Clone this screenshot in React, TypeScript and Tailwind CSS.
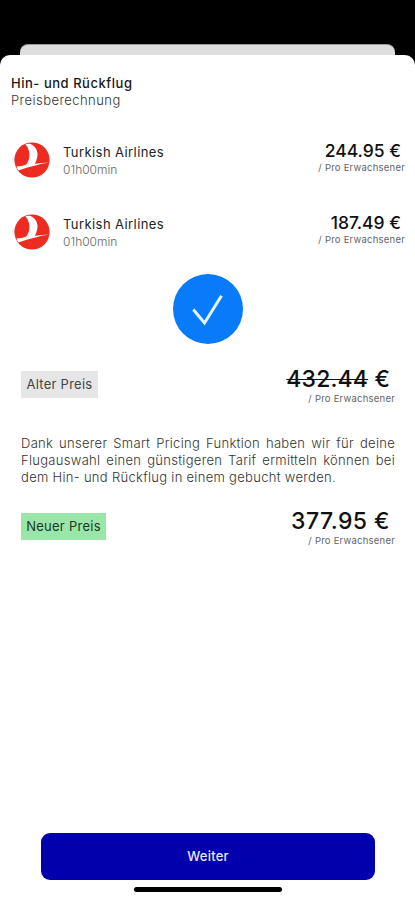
import React from "react";

function AirlineLogo() {
  return (
    <svg viewBox="0 0 36 36" className="mr-[12px] size-9 shrink-0" aria-hidden="true">
      <circle cx="18" cy="18" r="17.6" fill="#ee2b20" />
      <path
        d="M11.4 2.2 C14 1.2 16.5 1.6 18.5 3 C24.5 7.5 25 14 20.8 22 C26 21 31 20.6 35.2 20.5 C25.5 22 15.5 24.8 4.4 28.4 C3.4 27 2.8 25.8 2.5 24.4 C6.3 24.4 9.8 23.6 12.2 22.4 C17 16.5 16.4 8 11.4 2.2 Z"
        fill="#fff"
      />
    </svg>
  );
}

function FlightRow({ price }: { price: string }) {
  return (
    <div className="flex h-[72px] items-start pl-[14px] pr-[10px]">
      <AirlineLogo />
      <div className="ml-px mt-[2px]">
        <div className="text-[13px] leading-4 tracking-[0.42px] text-[#242424]">Turkish Airlines</div>
        <div className="mt-[3px] text-[12px] font-light leading-[14px] text-[#666]">01h00min</div>
      </div>
      <div className="ml-auto text-right">
        <div className="mr-[4px] text-[17.5px] font-medium leading-[18px] text-[#111]">{price} €</div>
        <div className="mt-[2px] text-[9.5px] leading-[11px] tracking-[0.23px] text-[#666]">/ Pro Erwachsener</div>
      </div>
    </div>
  );
}

function PriceRow({ label, price, old }: { label: string; price: string; old?: boolean }) {
  return (
    <div className="flex h-[42px] items-start justify-between pl-[21px] pr-5">
      <div
        className={`mt-[6px] flex h-[27px] items-center justify-center text-[13px] tracking-[0.25px] ${
          old ? "w-[77px] bg-[#e6e6e6] text-[#444]" : "w-[85px] bg-[#99e6a8] text-[#1d3824]"
        }`}
      >
        {label}
      </div>
      <div className="text-right">
        <div
          className={`mr-[5px] text-[23px] font-medium leading-7 text-[#111] ${
            old ? "tracking-[0.15px]" : "tracking-[0.45px]"
          }`}
        >
          <span className={old ? "line-through decoration-[1px]" : ""}>{price}</span> €
        </div>
        <div className="text-[9.5px] leading-[11px] tracking-[0.23px] text-[#666]">/ Pro Erwachsener</div>
      </div>
    </div>
  );
}

export default function App() {
  return (
    <div className="flex h-[900px] w-[415px] flex-col overflow-hidden bg-black font-['Inter','Liberation_Sans',sans-serif]">
      <div className="mx-5 mt-11 h-[11px] shrink-0 rounded-t-[8px] border-t border-[#999] bg-[#dedede]" />
      <main className="flex flex-1 flex-col rounded-t-[10px] bg-white">
        <header className="h-[87px] pl-[11px] pt-[20px]">
          <h1 className="text-[13px] font-medium leading-[17px] tracking-[0.53px] text-[#191919]">Hin- und Rückflug</h1>
          <p className="text-[13px] font-light leading-[17px] tracking-[0.45px] text-[#333]">Preisberechnung</p>
        </header>
        <FlightRow price="244.95" />
        <FlightRow price="187.49" />
        <svg viewBox="0 0 70 70" className="mx-auto -mt-3 size-[70px] shrink-0" aria-hidden="true">
          <circle cx="35" cy="35" r="35" fill="#087bfb" />
          <path d="M20.3 35.5 L31.5 49 L48.5 21.7" fill="none" stroke="#e2f3ff" strokeWidth="3" />
        </svg>
        <div className="mt-[21px]">
          <PriceRow label="Alter Preis" price="432.44" old />
        </div>
        <p className="ml-[21px] mr-5 mt-[28px] text-justify text-[13px] font-light leading-[17px] tracking-[0.3px] text-[#333]">
          Dank unserer Smart Pricing Funktion haben wir für deine Flugauswahl einen günstigeren Tarif ermitteln können bei dem Hin- und Rückflug in einem gebucht werden.
        </p>
        <div className="mt-[21px]">
          <PriceRow label="Neuer Preis" price="377.95" />
        </div>
        <button className="ml-[41px] mt-auto h-[47px] w-[334px] shrink-0 rounded-[9px] bg-[#0000ad] text-[13px] font-medium tracking-[0.2px] text-[#e9e9ff]">
          Weiter
        </button>
        <div className="mx-auto mb-2 mt-[7px] h-[5px] w-[148px] shrink-0 rounded-full bg-black" />
      </main>
    </div>
  );
}
